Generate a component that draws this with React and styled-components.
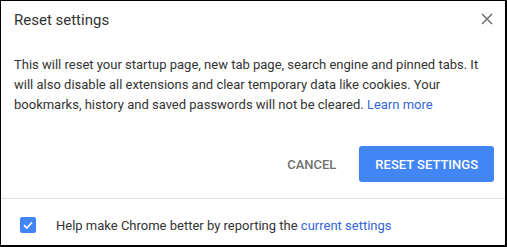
import React from "react";
import styled, { createGlobalStyle } from "styled-components";

const Global = createGlobalStyle`
  html, body { margin: 0; padding: 0; background: #fff; }
  body { font-family: Roboto, "Liberation Sans", Arial, sans-serif; }
  * { box-sizing: border-box; }
`;

const Dialog = styled.div`
  width: 507px;
  height: 247px;
  border: 1px solid #000;
  border-right-width: 2px;
  border-bottom-width: 2px;
  background: #fff;
  display: flex;
  flex-direction: column;
  color: #333;
`;

const Header = styled.div`
  display: flex;
  align-items: flex-start;
  justify-content: space-between;
  padding: 9px 12px 0 13px;
`;

const Title = styled.h1`
  margin: 0;
  font-size: 15px;
  font-weight: 400;
  line-height: 20px;
  color: #333;
`;

const CloseButton = styled.button`
  border: 0;
  background: none;
  padding: 0;
  width: 12px;
  height: 12px;
  margin-top: 3px;
  cursor: pointer;
  display: flex;
  svg { display: block; }
`;

const Body = styled.div`
  margin: 25px 0 0;
  padding: 0 13px;
  font-size: 13px;
  line-height: 20px;
  color: #333;
`;

const Link = styled.a`
  color: #3367d6;
  text-decoration: none;
`;

const Actions = styled.div`
  display: flex;
  justify-content: flex-end;
  align-items: center;
  gap: 8px;
  padding: 0 11px 0 0;
  margin-top: 31px;
`;

const Button = styled.button`
  height: 36px;
  border: 0;
  border-radius: 3px;
  padding: 0 ${(p) => (p.$primary ? "16px" : "15px")};
  font-family: Roboto, "Liberation Sans", Arial, sans-serif;
  font-size: 13px;
  font-weight: 500;
  text-transform: uppercase;
  background: ${(p) => (p.$primary ? "#4285f4" : "transparent")};
  color: ${(p) => (p.$primary ? "#fff" : "#6f6f6f")};
  cursor: pointer;
`;

const Footer = styled.div`
  margin-top: auto;
  border-top: 1px solid #e0e0e0;
  height: 47px;
  display: flex;
  align-items: center;
  padding: 6px 19px 0;
  gap: 20px;
  font-size: 13px;
  color: #333;
`;

const Check = styled.span`
  width: 16px;
  height: 16px;
  border-radius: 2px;
  background: #4285f4;
  display: flex;
  align-items: center;
  justify-content: center;
  flex: none;
`;

export default function App() {
  return (
    <>
      <Global />
      <Dialog>
        <Header>
          <Title>Reset settings</Title>
          <CloseButton aria-label="Close">
            <svg width="12" height="12" viewBox="0 0 12 12">
              <path d="M1 1L11 11M11 1L1 11" stroke="#737373" strokeWidth="1.6" />
            </svg>
          </CloseButton>
        </Header>
        <Body>
          This will reset your startup page, new tab page, search engine and pinned tabs. It
          will also disable all extensions and clear temporary data like cookies. Your
          bookmarks, history and saved passwords will not be cleared.{" "}
          <Link href="#">Learn more</Link>
        </Body>
        <Actions>
          <Button>Cancel</Button>
          <Button $primary>Reset settings</Button>
        </Actions>
        <Footer>
          <Check>
            <svg width="12" height="12" viewBox="0 0 12 12">
              <path d="M2 6.2L4.8 9L10 3.5" stroke="#fff" strokeWidth="1.8" fill="none" />
            </svg>
          </Check>
          <span>
            Help make Chrome better by reporting the <Link href="#">current settings</Link>
          </span>
        </Footer>
      </Dialog>
    </>
  );
}
